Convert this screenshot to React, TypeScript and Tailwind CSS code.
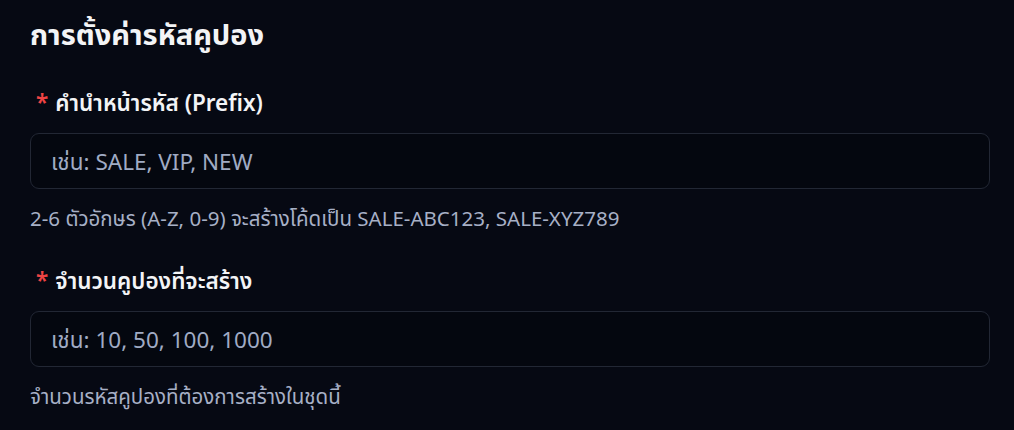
export default function App() {
  return (
    <div
      className="min-h-[430px] w-full bg-[#060913] pl-[30px] pr-[24px] pt-[14px] text-white"
      style={{ fontFamily: '"Noto Sans", "Noto Sans Thai", sans-serif' }}
    >
      <h2 className="text-[29px] font-bold leading-[40px] text-[#f3f4f6]">
        การตั้งค่ารหัสคูปอง
      </h2>

      <div className="mt-[34px]">
        <label className="flex items-center text-[22.5px] font-semibold leading-[30px] text-[#f3f4f6]">
          <span className="ml-[6px] mr-[7px] text-[#ef4444]">*</span>
          คำนำหน้ารหัส (Prefix)
        </label>
        <input
          className="mt-[15px] block h-[56px] w-full rounded-[9px] border border-[#222734] bg-[#04070f] px-[20px] text-[22.5px] text-white outline-none placeholder:text-[#a0abc4]"
          placeholder="เช่น: SALE, VIP, NEW"
        />
        <p className="mt-[15px] text-[20.5px] leading-[28px] text-[#a7b0c6]">
          2-6 ตัวอักษร (A-Z, 0-9) จะสร้างโค้ดเป็น SALE-ABC123, SALE-XYZ789
        </p>
      </div>

      <div className="mt-[34px]">
        <label className="flex items-center text-[22.5px] font-semibold leading-[30px] text-[#f3f4f6]">
          <span className="ml-[6px] mr-[7px] text-[#ef4444]">*</span>
          จำนวนคูปองที่จะสร้าง
        </label>
        <input
          className="mt-[15px] block h-[56px] w-full rounded-[9px] border border-[#222734] bg-[#04070f] px-[20px] text-[22.5px] text-white outline-none placeholder:text-[#a0abc4]"
          placeholder="เช่น: 10, 50, 100, 1000"
        />
        <p className="mt-[15px] text-[20.5px] leading-[28px] text-[#a7b0c6]">
          จำนวนรหัสคูปองที่ต้องการสร้างในชุดนี้
        </p>
      </div>
    </div>
  );
}
